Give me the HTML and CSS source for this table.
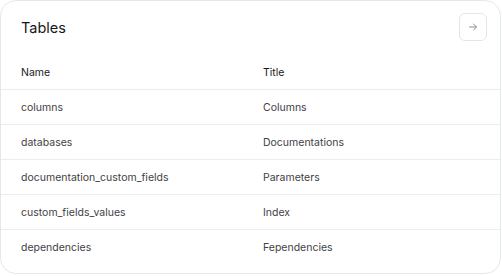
FILE: index.html
```html
<!DOCTYPE html>
<html>
<head>
<meta charset="utf-8">
<link rel="stylesheet" href="styles.css">
</head>
<body>
<section class="card">
  <header class="card-head">
    <h2 class="card-title">Tables</h2>
    <button class="icon-btn" aria-label="Open">
      <svg width="10" height="10" viewBox="0 0 10 10" fill="none" stroke="#8b8f96" stroke-width="1" stroke-linecap="round" stroke-linejoin="round">
        <path d="M1.5 5h7M5.5 2l3 3-3 3"/>
      </svg>
    </button>
  </header>
  <div class="table">
    <div class="row head"><div class="cell">Name</div><div class="cell">Title</div></div>
    <div class="row"><div class="cell">columns</div><div class="cell">Columns</div></div>
    <div class="row"><div class="cell">databases</div><div class="cell">Documentations</div></div>
    <div class="row"><div class="cell">documentation_custom_fields</div><div class="cell">Parameters</div></div>
    <div class="row"><div class="cell">custom_fields_values</div><div class="cell">Index</div></div>
    <div class="row"><div class="cell">dependencies</div><div class="cell">Fependencies</div></div>
  </div>
</section>
</body>
</html>
```

FILE: styles.css
```css
* { box-sizing: border-box; }
html, body { margin: 0; padding: 0; background: #ffffff; }
body { font-family: Inter, "Noto Sans", sans-serif; }

.card {
  width: 501px;
  height: 274px;
  border: 1px solid #e6e7e9;
  border-radius: 16px;
  background: #fff;
  padding: 12px 0 0 0;
  overflow: hidden;
}

.card-head {
  display: flex;
  align-items: center;
  justify-content: space-between;
  padding: 0 13px 0 20px;
  height: 28px;
}

.card-title {
  margin: 0;
  font-size: 14.5px;
  font-weight: 400;
  color: #17181a;
}

.icon-btn {
  width: 28px;
  height: 28px;
  border: 1px solid #e4e5e8;
  border-radius: 6px;
  background: #fff;
  padding: 0;
  display: flex;
  align-items: center;
  justify-content: center;
}

.table {
  margin-top: 14px;
}

.row {
  display: grid;
  grid-template-columns: 242px 1fr;
  height: 35px;
  align-items: center;
  border-top: 1px solid #ececee;
  font-size: 10.5px;
  color: #3f4146;
}

.row.head {
  border-top: none;
  height: 34px;
  color: #17181a;
}

.cell {
  padding-left: 20px;
}
```
